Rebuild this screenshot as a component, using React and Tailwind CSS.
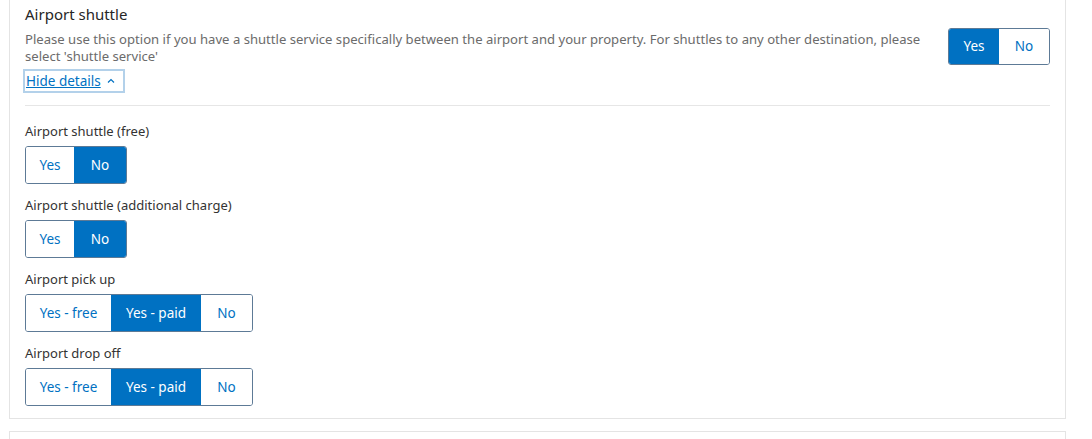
import React from "react";

const font = { fontFamily: '"Noto Sans", "Open Sans", Arial, sans-serif' };

function Seg({ options, selected, widths, height = "h-[38px]" }) {
  return (
    <div className={`inline-flex ${height} rounded-[3px] border border-[#5d7a96] overflow-hidden`}>
      {options.map((o, i) => (
        <div
          key={o}
          className={`${widths[i]} flex items-center justify-center text-[13.5px] ${
            i === selected ? "bg-[#0071c2] text-white" : "bg-white text-[#0071c2]"
          }`}
        >
          {o}
        </div>
      ))}
    </div>
  );
}

function Row({ label, options, selected, widths }) {
  return (
    <div className="flex flex-col">
      <div className="text-[13px] leading-[17px] text-[#333]">{label}</div>
      <div className="mt-[6px]">
        <Seg options={options} selected={selected} widths={widths} />
      </div>
    </div>
  );
}

export default function App() {
  return (
    <div className="w-[1092px] h-[439px] bg-white overflow-hidden" style={font}>
      <div className="ml-[9px] w-[1057px] border border-t-0 border-[#e4e4e4] bg-white px-[15px] pt-[4px] pb-[12px]">
        <div className="flex justify-between">
          <div className="flex-1 pr-[24px]">
            <div className="text-[15px] leading-[20px] text-[#262626]">Airport shuttle</div>
            <div className="mt-[7px] text-[13.1px] leading-[17px] text-[#6b6b6b]">
              Please use this option if you have a shuttle service specifically between the airport and your property. For shuttles to any other destination, please select 'shuttle service'
            </div>
            <div className="mt-[4px] ml-[-2px] inline-flex items-center h-[24px] pl-[1px] pr-[7px] border-2 border-[#b3d1ea]">
              <span className="text-[13.5px] text-[#0071c2] underline">Hide details</span>
              <svg width="10" height="10" viewBox="0 0 10 10" className="ml-[5px]">
                <path d="M2 6.5 L5 3.5 L8 6.5" fill="none" stroke="#0071c2" strokeWidth="1.2" />
              </svg>
            </div>
          </div>
          <div className="pt-[24px]">
            <Seg options={["Yes", "No"]} selected={0} widths={["w-[50px]", "w-[50px]"]} height="h-[37px]" />
          </div>
        </div>
        <div className="mt-[12px] border-t border-[#e6e6e6]" />
        <div className="pt-[17px] flex flex-col gap-[13px]">
          <Row label="Airport shuttle (free)" options={["Yes", "No"]} selected={1} widths={["w-[48px]", "w-[52px]"]} />
          <Row label="Airport shuttle (additional charge)" options={["Yes", "No"]} selected={1} widths={["w-[48px]", "w-[52px]"]} />
          <Row label="Airport pick up" options={["Yes - free", "Yes - paid", "No"]} selected={1} widths={["w-[85px]", "w-[90px]", "w-[51px]"]} />
          <Row label="Airport drop off" options={["Yes - free", "Yes - paid", "No"]} selected={1} widths={["w-[85px]", "w-[90px]", "w-[51px]"]} />
        </div>
      </div>
      <div className="ml-[9px] mt-[12px] w-[1057px] h-[40px] border border-b-0 border-[#e4e4e4] bg-white" />
    </div>
  );
}
